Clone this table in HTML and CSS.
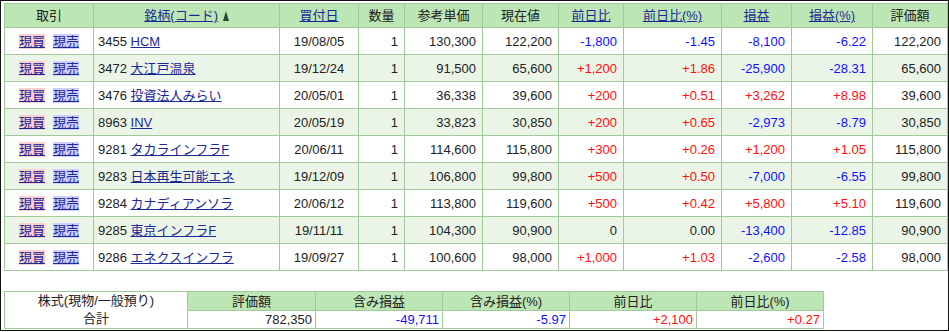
FILE: index.html
```html
<!DOCTYPE html>
<html lang="ja">
<head>
<meta charset="utf-8">
<link rel="stylesheet" href="styles.css">
</head>
<body>
<div class="frame">
  <table class="main">
    <colgroup>
      <col style="width:89px"><col style="width:186px"><col style="width:79px"><col style="width:46px"><col style="width:78px"><col style="width:76px"><col style="width:65px"><col style="width:98px"><col style="width:70px"><col style="width:81px"><col style="width:75px">
    </colgroup>
    <thead>
      <tr class="head">
        <th>取引</th>
        <th><a href="#">銘柄(コード)</a> <svg class="arrow" width="6" height="10" viewBox="0 0 6 10"><path d="M3 0 L6 10 L0 10 Z" fill="#1e4d3a"/></svg></th>
        <th><a href="#">買付日</a></th>
        <th>数量</th>
        <th>参考単価</th>
        <th>現在値</th>
        <th><a href="#">前日比</a></th>
        <th><a href="#">前日比(%)</a></th>
        <th><a href="#">損益</a></th>
        <th><a href="#">損益(%)</a></th>
        <th>評価額</th>
      </tr>
    </thead>
    <tbody>
      <tr>
        <td class="trade"><a class="buy" href="#">現買</a><a class="sell" href="#">現売</a></td>
        <td class="name">3455 <a href="#">HCM</a></td>
        <td class="date">19/08/05</td><td class="num">1</td><td class="num">130,300</td><td class="num">122,200</td>
        <td class="num minus">-1,800</td><td class="num minus">-1.45</td><td class="num minus">-8,100</td><td class="num minus">-6.22</td><td class="num">122,200</td>
      </tr>
      <tr class="alt">
        <td class="trade"><a class="buy" href="#">現買</a><a class="sell" href="#">現売</a></td>
        <td class="name">3472 <a href="#">大江戸温泉</a></td>
        <td class="date">19/12/24</td><td class="num">1</td><td class="num">91,500</td><td class="num">65,600</td>
        <td class="num plus">+1,200</td><td class="num plus">+1.86</td><td class="num minus">-25,900</td><td class="num minus">-28.31</td><td class="num">65,600</td>
      </tr>
      <tr>
        <td class="trade"><a class="buy" href="#">現買</a><a class="sell" href="#">現売</a></td>
        <td class="name">3476 <a href="#">投資法人みらい</a></td>
        <td class="date">20/05/01</td><td class="num">1</td><td class="num">36,338</td><td class="num">39,600</td>
        <td class="num plus">+200</td><td class="num plus">+0.51</td><td class="num plus">+3,262</td><td class="num plus">+8.98</td><td class="num">39,600</td>
      </tr>
      <tr class="alt">
        <td class="trade"><a class="buy" href="#">現買</a><a class="sell" href="#">現売</a></td>
        <td class="name">8963 <a href="#">INV</a></td>
        <td class="date">20/05/19</td><td class="num">1</td><td class="num">33,823</td><td class="num">30,850</td>
        <td class="num plus">+200</td><td class="num plus">+0.65</td><td class="num minus">-2,973</td><td class="num minus">-8.79</td><td class="num">30,850</td>
      </tr>
      <tr>
        <td class="trade"><a class="buy" href="#">現買</a><a class="sell" href="#">現売</a></td>
        <td class="name">9281 <a href="#">タカラインフラF</a></td>
        <td class="date">20/06/11</td><td class="num">1</td><td class="num">114,600</td><td class="num">115,800</td>
        <td class="num plus">+300</td><td class="num plus">+0.26</td><td class="num plus">+1,200</td><td class="num plus">+1.05</td><td class="num">115,800</td>
      </tr>
      <tr class="alt">
        <td class="trade"><a class="buy" href="#">現買</a><a class="sell" href="#">現売</a></td>
        <td class="name">9283 <a href="#">日本再生可能エネ</a></td>
        <td class="date">19/12/09</td><td class="num">1</td><td class="num">106,800</td><td class="num">99,800</td>
        <td class="num plus">+500</td><td class="num plus">+0.50</td><td class="num minus">-7,000</td><td class="num minus">-6.55</td><td class="num">99,800</td>
      </tr>
      <tr>
        <td class="trade"><a class="buy" href="#">現買</a><a class="sell" href="#">現売</a></td>
        <td class="name">9284 <a href="#">カナディアンソラ</a></td>
        <td class="date">20/06/12</td><td class="num">1</td><td class="num">113,800</td><td class="num">119,600</td>
        <td class="num plus">+500</td><td class="num plus">+0.42</td><td class="num plus">+5,800</td><td class="num plus">+5.10</td><td class="num">119,600</td>
      </tr>
      <tr class="alt">
        <td class="trade"><a class="buy" href="#">現買</a><a class="sell" href="#">現売</a></td>
        <td class="name">9285 <a href="#">東京インフラF</a></td>
        <td class="date">19/11/11</td><td class="num">1</td><td class="num">104,300</td><td class="num">90,900</td>
        <td class="num">0</td><td class="num">0.00</td><td class="num minus">-13,400</td><td class="num minus">-12.85</td><td class="num">90,900</td>
      </tr>
      <tr>
        <td class="trade"><a class="buy" href="#">現買</a><a class="sell" href="#">現売</a></td>
        <td class="name">9286 <a href="#">エネクスインフラ</a></td>
        <td class="date">19/09/27</td><td class="num">1</td><td class="num">100,600</td><td class="num">98,000</td>
        <td class="num plus">+1,000</td><td class="num plus">+1.03</td><td class="num minus">-2,600</td><td class="num minus">-2.58</td><td class="num">98,000</td>
      </tr>
    </tbody>
  </table>

  <table class="summary">
    <colgroup>
      <col style="width:183px"><col style="width:128px"><col style="width:127px"><col style="width:127px"><col style="width:127px"><col style="width:127px">
    </colgroup>
    <tr class="shead">
      <td class="label" rowspan="2">株式(現物/一般預り)<br>合計</td>
      <th>評価額</th><th>含み損益</th><th>含み損益(%)</th><th>前日比</th><th>前日比(%)</th>
    </tr>
    <tr class="sdata">
      <td>782,350</td><td class="minus">-49,711</td><td class="minus">-5.97</td><td class="plus">+2,100</td><td class="plus">+0.27</td>
    </tr>
  </table>
</div>
</body>
</html>
```

FILE: styles.css
```css
html, body {
  margin: 0;
  padding: 0;
  background: #ffffff;
}

body {
  font-family: "Liberation Sans", Arial, "Noto Sans CJK JP", sans-serif;
  font-size: 13px;
  color: #222222;
}

.frame {
  box-sizing: border-box;
  width: 949px;
  height: 331px;
  border: 1px solid #111111;
  padding: 2px 1px 0 3px;
}

a {
  color: #1c2a96;
  text-decoration: underline;
}

table {
  border-collapse: collapse;
  table-layout: fixed;
}

.main {
  width: 943px;
}

.main th,
.main td,
.summary th,
.summary td {
  border: 1px solid #a2c99b;
  padding: 0 6px;
  white-space: nowrap;
  overflow: hidden;
  line-height: 15px;
}

.main th {
  background: #bde6b5;
  font-weight: normal;
  text-align: center;
  height: 23px;
  padding: 0 2px;
}

.main td {
  height: 26px;
}

.main tr.alt td {
  background: #eaf5e7;
}

.arrow {
  vertical-align: -1px;
  margin-left: 1px;
}

.trade {
  text-align: center;
}

.main td.trade {
  padding: 0;
}

.buy,
.sell {
  display: inline-block;
  margin: 0 4px;
}

.buy {
  background: #ffcfcf;
}

.sell {
  background: #cfcfff;
}

.main td.name {
  padding: 0 4px;
  text-align: left;
}

.date {
  text-align: center;
}

.main td.date {
  padding: 0;
}

.num {
  text-align: right;
}

.minus {
  color: #1010ff;
}

.plus {
  color: #ff1010;
}

.summary {
  width: 819px;
  margin-top: 20px;
}

.summary th {
  background: #bde6b5;
  font-weight: normal;
  text-align: center;
  height: 18px;
  padding: 0 2px;
}

.summary td {
  height: 17px;
  text-align: right;
  padding: 0 3px;
}

.summary td.label {
  text-align: center;
  line-height: 18px;
  padding: 0;
}
```
